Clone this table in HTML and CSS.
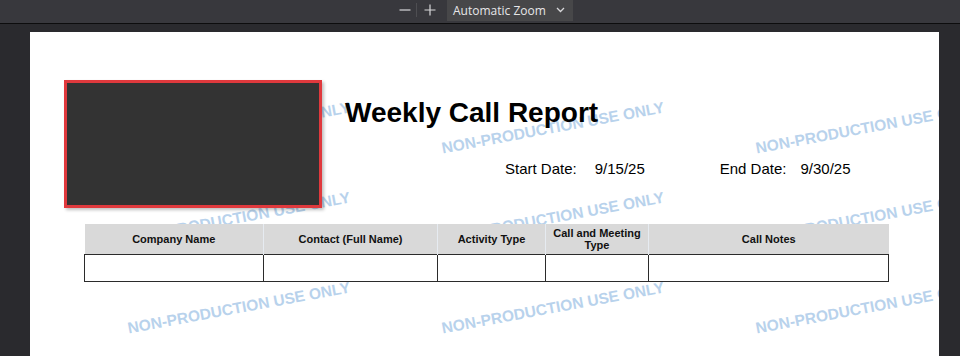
FILE: index.html
```html
<!DOCTYPE html>
<html lang="en">
<head>
<meta charset="utf-8">
<title>Weekly Call Report</title>
<link rel="stylesheet" href="styles.css">
</head>
<body>
<div class="toolbar">
  <button class="tb-btn" aria-label="Zoom out">
    <svg width="12" height="12" viewBox="0 0 12 12"><path d="M0.5 6h11" stroke="#d8d8da" stroke-width="1.2"/></svg>
  </button>
  <span class="tb-sep"></span>
  <button class="tb-btn" aria-label="Zoom in">
    <svg width="12" height="12" viewBox="0 0 12 12"><path d="M0.5 6h11M6 0.5v11" stroke="#d8d8da" stroke-width="1.2"/></svg>
  </button>
  <div class="zoom-select">
    <span>Automatic Zoom</span>
    <svg width="9" height="6" viewBox="0 0 9 6"><path d="M1 1l3.5 3.5L8 1" fill="none" stroke="#d8d8da" stroke-width="1.3"/></svg>
  </div>
</div>
<div class="viewer">
  <div class="page">
    <div class="watermarks" aria-hidden="true">
      <span>NON-PRODUCTION USE ONLY</span><span>NON-PRODUCTION USE ONLY</span><span>NON-PRODUCTION USE ONLY</span>
      <span>NON-PRODUCTION USE ONLY</span><span>NON-PRODUCTION USE ONLY</span><span>NON-PRODUCTION USE ONLY</span>
      <span>NON-PRODUCTION USE ONLY</span><span>NON-PRODUCTION USE ONLY</span><span>NON-PRODUCTION USE ONLY</span>
    </div>
    <div class="content">
      <div class="report-head">
        <div class="logo-box"></div>
        <div class="head-text">
          <h1 class="title">Weekly Call Report</h1>
          <div class="dates">
            <span class="label">Start Date:</span><span class="value">9/15/25</span>
            <span class="label end">End Date:</span><span class="value end-val">9/30/25</span>
          </div>
        </div>
      </div>
      <table class="report">
        <colgroup>
          <col class="c1"><col class="c2"><col class="c3"><col class="c4"><col class="c5">
        </colgroup>
        <thead>
          <tr>
            <th>Company Name</th>
            <th>Contact (Full Name)</th>
            <th>Activity Type</th>
            <th>Call and Meeting Type</th>
            <th>Call Notes</th>
          </tr>
        </thead>
        <tbody>
          <tr><td></td><td></td><td></td><td></td><td></td></tr>
        </tbody>
      </table>
    </div>
  </div>
</div>
</body>
</html>
```
FILE: styles.css
```css
* { box-sizing: border-box; }
html, body { margin: 0; height: 100%; }
body {
  background: #2a2a2e;
  font-family: "Liberation Sans", Arial, sans-serif;
  overflow: hidden;
}
.toolbar {
  height: 24px;
  background: #38383d;
  border-bottom: 1px solid #0c0c0d;
  display: flex;
  align-items: flex-start;
  padding-left: 396px;
}
.tb-btn {
  background: none;
  border: 0;
  padding: 0;
  width: 17px;
  height: 19px;
  display: flex;
  align-items: center;
  justify-content: center;
}
.tb-sep {
  width: 1px;
  height: 14px;
  margin: 3px 4px 0 3px;
  background: #4e4e52;
}
.zoom-select {
  margin-left: 9px;
  width: 126px;
  height: 21px;
  background: #474749;
  color: #e6e6e8;
  font-family: "Segoe UI", "Open Sans", "Liberation Sans", sans-serif;
  font-size: 12px;
  display: flex;
  align-items: center;
  justify-content: space-between;
  padding: 0 8px 1px 6px;
}
.viewer {
  padding: 8px 0 0 30px;
}
.page {
  position: relative;
  width: 909px;
  height: 330px;
  background: #fff;
  overflow: hidden;
}
.watermarks {
  position: absolute;
  left: 52px;
  top: 51px;
  display: grid;
  grid-template-columns: repeat(3, 314px);
  grid-template-rows: repeat(3, 90px);
  justify-items: center;
  align-items: center;
  z-index: 0;
}
.watermarks span {
  white-space: nowrap;
  font-weight: bold;
  font-size: 15.5px;
  color: #b8d2ec;
  transform: rotate(-10.5deg);
}
.content {
  position: relative;
  z-index: 1;
  padding: 48px 0 0 34px;
}
.report-head {
  display: flex;
  height: 127px;
}
.logo-box {
  width: 258px;
  height: 128px;
  background: #333333;
  border: 3px solid #e0393d;
  box-shadow: 2px 2px 3px rgba(0,0,0,0.25);
  flex: none;
}
.head-text {
  margin-left: 23px;
}
.title {
  margin: 17px 0 0 0;
  font-size: 28px;
  line-height: 32px;
  font-weight: bold;
  color: #000;
}
.dates {
  margin-top: 31px;
  padding-left: 160px;
  font-size: 15px;
  line-height: 17px;
  color: #000;
  display: flex;
}
.dates .value { margin-left: 18px; }
.dates .end { margin-left: 75px; }
.dates .end-val { margin-left: 14px; }
.report {
  margin: 17px 0 0 20px;
  border-collapse: collapse;
  table-layout: fixed;
  width: 804px;
}
.c1 { width: 179px; }
.c2 { width: 174px; }
.c3 { width: 108px; }
.c4 { width: 103px; }
.c5 { width: 240px; }
.report th {
  background: #d9d9d9;
  height: 30px;
  padding: 0 4px;
  font-size: 11px;
  line-height: 12px;
  font-weight: bold;
  color: #111;
  text-align: center;
  vertical-align: middle;
  border: 0;
  border-left: 1px solid #e6ebf1;
}
.report th:first-child { border-left: 0; }
.report td {
  height: 27px;
  border: 1px solid #2b2b2b;
  padding: 0;
  background: #fff;
}
```
